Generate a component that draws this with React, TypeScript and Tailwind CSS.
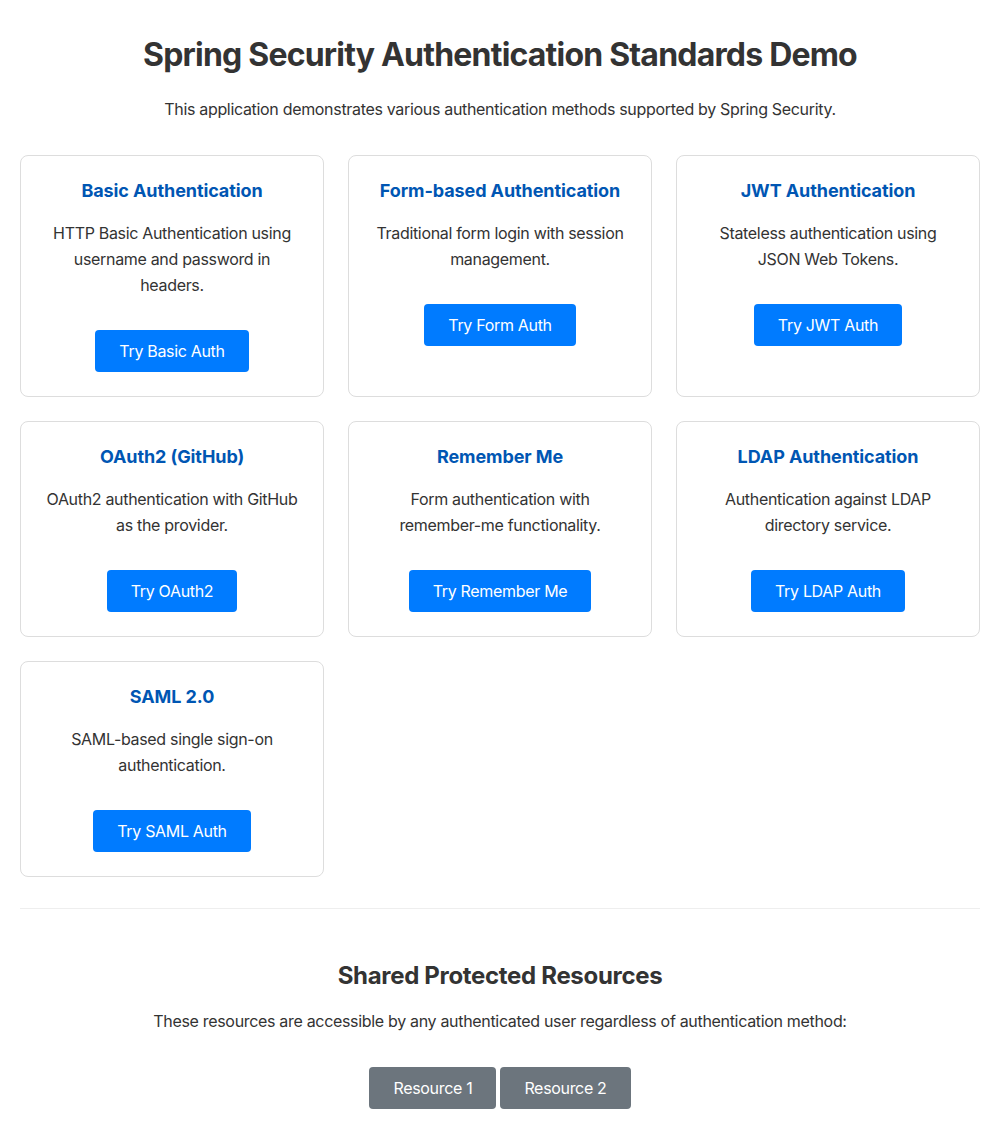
const methods = [
  {
    title: "Basic Authentication",
    text: "HTTP Basic Authentication using username and password in headers.",
    button: "Try Basic Auth",
  },
  {
    title: "Form-based Authentication",
    text: "Traditional form login with session management.",
    button: "Try Form Auth",
  },
  {
    title: "JWT Authentication",
    text: "Stateless authentication using JSON Web Tokens.",
    button: "Try JWT Auth",
  },
  {
    title: "OAuth2 (GitHub)",
    text: "OAuth2 authentication with GitHub as the provider.",
    button: "Try OAuth2",
  },
  {
    title: "Remember Me",
    text: "Form authentication with remember-me functionality.",
    button: "Try Remember Me",
  },
  {
    title: "LDAP Authentication",
    text: "Authentication against LDAP directory service.",
    button: "Try LDAP Auth",
  },
  {
    title: "SAML 2.0",
    text: "SAML-based single sign-on authentication.",
    button: "Try SAML Auth",
  },
];

const App = () => {
  return (
    <div className="min-h-[1130px] bg-white p-5 text-[#333] tracking-[-0.02em] font-['Inter',_'Liberation_Sans',_sans-serif]">
      <h1 className="mt-[15px] text-center text-[32px] font-bold leading-[40px] tracking-[-0.025em] text-[#333]">
        Spring Security Authentication Standards Demo
      </h1>
      <p className="mt-[21px] text-center text-base leading-[26px]">
        This application demonstrates various authentication methods supported by Spring Security.
      </p>

      <div className="mt-[33px] grid grid-cols-3 gap-6">
        {methods.map((m) => (
          <div
            key={m.title}
            className="rounded-lg border border-[#ddd] px-5 pt-6 pb-6 text-center"
          >
            <h3 className="text-lg font-bold leading-[22px] tracking-[-0.005em] text-[#0056b3]">{m.title}</h3>
            <p className="mt-[18px] text-base leading-[26px] text-[#333]">{m.text}</p>
            <button className="mt-8 rounded bg-[#007bff] px-6 py-[10px] text-base leading-[22px] text-white">
              {m.button}
            </button>
          </div>
        ))}
      </div>

      <hr className="mt-[31px] border-t border-[#eee]" />

      <div className="text-center">
        <h2 className="mt-[52px] text-2xl font-bold leading-[29px] text-[#333]">
          Shared Protected Resources
        </h2>
        <p className="mt-[18px] text-base leading-[26px]">
          These resources are accessible by any authenticated user regardless of authentication method:
        </p>
        <div className="mt-[33px] flex justify-center gap-1">
          <button className="rounded bg-[#6c757d] px-6 py-[10px] text-base leading-[22px] text-white">
            Resource 1
          </button>
          <button className="rounded bg-[#6c757d] px-6 py-[10px] text-base leading-[22px] text-white">
            Resource 2
          </button>
        </div>
      </div>
    </div>
  );
};

export default App;
